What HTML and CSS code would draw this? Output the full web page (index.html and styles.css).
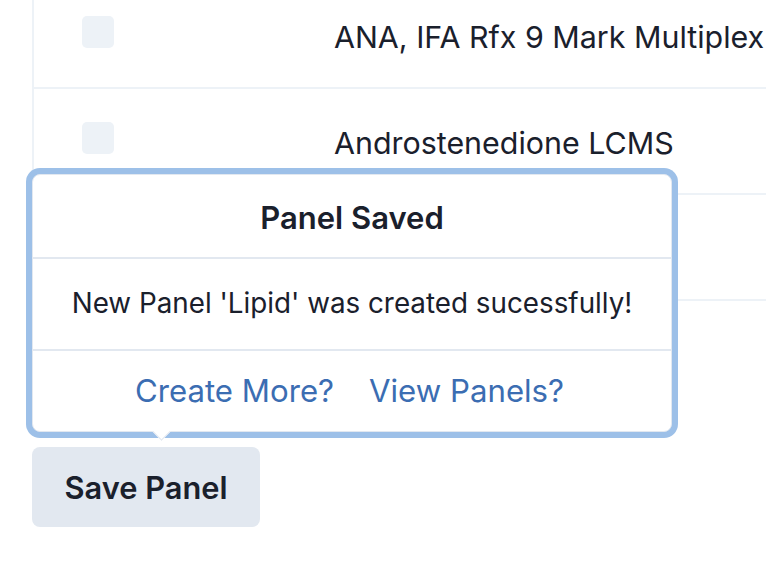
FILE: index.html
```html
<!DOCTYPE html>
<html lang="en">
<head>
<meta charset="utf-8">
<title>Panel Saved</title>
<link rel="stylesheet" href="styles.css">
</head>
<body>
<div class="page">
  <div class="table">
    <div class="row">
      <div class="cell-check"><span class="checkbox"></span></div>
      <div class="cell-name">ANA, IFA Rfx 9 Mark Multiplex</div>
    </div>
    <div class="row">
      <div class="cell-check"><span class="checkbox"></span></div>
      <div class="cell-name">Androstenedione LCMS</div>
    </div>
    <div class="row">
      <div class="cell-check"><span class="checkbox"></span></div>
      <div class="cell-name">Apolipoprotein B</div>
    </div>
  </div>
  <div class="actions">
    <div class="popover">
      <div class="popover-header">Panel Saved</div>
      <div class="popover-body">New Panel 'Lipid' was created sucessfully!</div>
      <div class="popover-footer">
        <a class="link" href="#">Create More?</a>
        <a class="link" href="#">View Panels?</a>
      </div>
      <span class="popover-arrow"></span>
    </div>
    <button class="btn" type="button">Save Panel</button>
  </div>
</div>
</body>
</html>
```
FILE: styles.css
```css
html, body {
  margin: 0;
  padding: 0;
  background: #ffffff;
}
body {
  font-family: Inter, "Noto Sans", sans-serif;
  color: #1a202c;
  overflow: hidden;
  width: 766px;
  height: 570px;
}
.page {
  padding-left: 32px;
}
.table {
  margin-top: -17px;
  border-left: 2px solid #edf2f7;
}
.row {
  display: flex;
  align-items: baseline;
  height: 106px;
  padding-top: 33px;
  box-sizing: border-box;
  border-bottom: 2px solid #edf2f7;
  overflow: hidden;
}
.cell-check {
  width: 300px;
  padding-left: 48px;
  box-sizing: border-box;
  flex: none;
}
.checkbox {
  display: inline-block;
  width: 32px;
  height: 32px;
  border-radius: 5px;
  background: #edf2f7;
  vertical-align: baseline;
}
.cell-name {
  font-size: 30.4px;
  line-height: 42px;
  white-space: nowrap;
}
.actions {
  position: relative;
  margin-top: 146px;
}
.popover {
  position: absolute;
  left: 0;
  bottom: calc(100% + 15px);
  width: 640px;
  box-sizing: border-box;
  background: #ffffff;
  border: 1px solid #e2e8f0;
  border-radius: 8px;
  box-shadow: 0 0 0 6px #9dc0e8;
  text-align: center;
  z-index: 2;
}
.popover-header {
  font-size: 31px;
  font-weight: 600;
  line-height: 40px;
  padding: 23px 0 19px;
  border-bottom: 2px solid #e2e8f0;
}
.popover-body {
  font-size: 27.8px;
  line-height: 40px;
  padding: 24px 0 26px;
  border-bottom: 2px solid #e2e8f0;
}
.popover-footer {
  display: flex;
  justify-content: center;
  gap: 35px;
  padding: 19px 0 19px;
  margin-left: -5px;
}
.link {
  font-size: 31.2px;
  line-height: 42px;
  color: #3b6db2;
  text-decoration: none;
}
.popover-arrow {
  position: absolute;
  left: 122px;
  bottom: -7px;
  width: 12px;
  height: 12px;
  background: #ffffff;
  border-right: 1px solid #e2e8f0;
  border-bottom: 1px solid #e2e8f0;
  transform: rotate(45deg);
}
.btn {
  display: block;
  width: 228px;
  height: 80px;
  border: none;
  border-radius: 8px;
  background: #e2e8f0;
  color: #1a202c;
  font-family: Inter, "Noto Sans", sans-serif;
  font-size: 30.8px;
  font-weight: 600;
  padding: 0;
  cursor: pointer;
}
```
